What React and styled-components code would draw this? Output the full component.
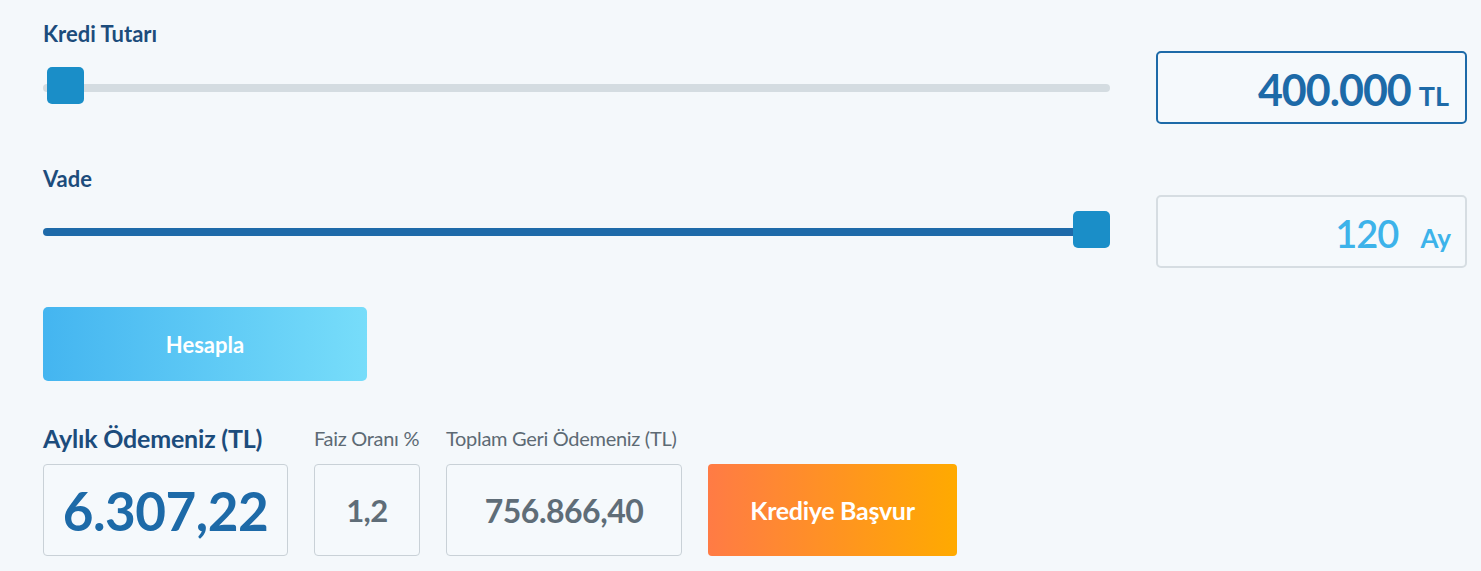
import React from 'react';
import styled, { createGlobalStyle } from 'styled-components';

const GlobalStyle = createGlobalStyle`
  html, body {
    margin: 0;
    padding: 0;
    background: #f4f8fb;
    font-family: Lato, "Open Sans", "Liberation Sans", sans-serif;
  }
`;

const Page = styled.div`
  width: 1481px;
  height: 571px;
  box-sizing: border-box;
  padding: 22px 14px 0 43px;
  background: #f4f8fb;
  overflow: hidden;
`;

const Section = styled.div`
  display: grid;
  grid-template-columns: 1067px 311px;
  column-gap: 46px;
  margin-bottom: ${p => p.$gap || 0}px;
`;

const Column = styled.div`
  display: flex;
  flex-direction: column;
`;

const Label = styled.div`
  font-size: 22px;
  line-height: 24px;
  font-weight: 700;
  color: #1c4c7c;
  height: 24px;
`;

const Slider = styled.div`
  position: relative;
  height: 37px;
  margin-top: ${p => p.$top}px;
`;

const Track = styled.div`
  position: absolute;
  left: 0;
  right: 0;
  top: 17px;
  height: 8px;
  border-radius: 4px;
  background: #d4dce1;
  overflow: hidden;
`;

const Fill = styled.div`
  height: 100%;
  background: #1e6aa9;
`;

const Thumb = styled.div`
  position: absolute;
  top: 0;
  width: 37px;
  height: 37px;
  border-radius: 5px;
  background: #1a8ec8;
`;

const ValueBox = styled.div`
  margin-top: ${p => p.$top}px;
  height: 73px;
  box-sizing: border-box;
  border: ${p => (p.$active ? '2px solid #1d6aa8' : '2px solid #d6dde2')};
  border-radius: 5px;
  background: #f5f9fc;
  display: flex;
  align-items: baseline;
  justify-content: flex-end;
  padding: 0 ${p => p.$pad}px 0 0;
  line-height: 73px;
  color: ${p => (p.$active ? '#1d6aa8' : '#3db3ea')};
`;

const BigNum = styled.span`
  font-size: ${p => p.$size}px;
  font-weight: ${p => p.$weight || 700};
  letter-spacing: -1px;
`;

const Unit = styled.span`
  font-size: ${p => p.$size}px;
  font-weight: 700;
  margin-left: ${p => p.$gap}px;
`;

const CalcButton = styled.button`
  width: 324px;
  height: 74px;
  border: none;
  border-radius: 5px;
  background: linear-gradient(90deg, #44b5f0 0%, #77ddfa 100%);
  color: #fff;
  font-family: inherit;
  font-size: 22px;
  font-weight: 700;
  cursor: pointer;
  margin-top: 39px;
  display: block;
`;

const Results = styled.div`
  display: flex;
  align-items: flex-end;
  gap: 26px;
  margin-top: 43px;
`;

const ResultCol = styled.div`
  display: flex;
  flex-direction: column;
`;

const ResultLabel = styled.div`
  font-size: ${p => (p.$main ? 25 : 20)}px;
  font-weight: ${p => (p.$main ? 700 : 400)};
  color: ${p => (p.$main ? '#1c4c7c' : '#5d6a74')};
  letter-spacing: ${p => (p.$main ? -0.2 : -0.3)}px;
  line-height: 28px;
  margin-bottom: 12px;
  white-space: nowrap;
`;

const ResultBox = styled.div`
  width: ${p => p.$w}px;
  height: 92px;
  box-sizing: border-box;
  border: 1px solid #c9d1d7;
  border-radius: 4px;
  background: #f5f9fc;
  display: flex;
  align-items: center;
  justify-content: center;
  font-size: ${p => p.$size}px;
  font-weight: 700;
  letter-spacing: -0.5px;
  color: ${p => (p.$blue ? '#1d6aa8' : '#5f6d78')};
`;

const ApplyButton = styled.button`
  width: 249px;
  height: 92px;
  border: none;
  border-radius: 4px;
  background: linear-gradient(90deg, #ff7b45 0%, #ffaa00 100%);
  color: #fff;
  font-family: inherit;
  font-size: 25px;
  font-weight: 700;
  letter-spacing: -0.3px;
  cursor: pointer;
`;

const RangeSlider = ({ value, min, max, top }) => {
  const pct = (value - min) / (max - min);
  return (
    <Slider $top={top}>
      <Track>
        <Fill style={{ width: `${pct * 100}%` }} />
      </Track>
      <Thumb style={{ left: `calc(${pct} * (100% - 37px) + ${pct === 0 ? 4 : 0}px)` }} />
    </Slider>
  );
};

const App = () => {
  return (
    <Page>
      <GlobalStyle />
      <Section $gap={43}>
        <Column>
          <Label>Kredi Tutarı</Label>
          <RangeSlider value={0} min={0} max={100} top={21} />
        </Column>
        <ValueBox $active $top={29} $pad={16}>
          <BigNum $size={43}>400.000</BigNum>
          <Unit $size={27} $gap={8}>TL</Unit>
        </ValueBox>
      </Section>
      <Section>
        <Column>
          <Label>Vade</Label>
          <RangeSlider value={120} min={12} max={120} top={20} />
        </Column>
        <ValueBox $top={28} $pad={14}>
          <BigNum $size={38} $weight={600}>120</BigNum>
          <Unit $size={26} $gap={22}>Ay</Unit>
        </ValueBox>
      </Section>
      <CalcButton>Hesapla</CalcButton>
      <Results>
        <ResultCol>
          <ResultLabel $main>Aylık Ödemeniz (TL)</ResultLabel>
          <ResultBox $w={245} $size={53} $blue>6.307,22</ResultBox>
        </ResultCol>
        <ResultCol>
          <ResultLabel>Faiz Oranı %</ResultLabel>
          <ResultBox $w={106} $size={31}>1,2</ResultBox>
        </ResultCol>
        <ResultCol>
          <ResultLabel>Toplam Geri Ödemeniz (TL)</ResultLabel>
          <ResultBox $w={236} $size={32}>756.866,40</ResultBox>
        </ResultCol>
        <ApplyButton>Krediye Başvur</ApplyButton>
      </Results>
    </Page>
  );
};

export default App;
